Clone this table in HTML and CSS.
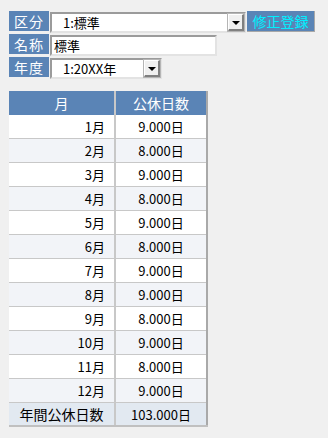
FILE: index.html
```html
<!DOCTYPE html>
<html lang="ja">
<head>
<meta charset="utf-8">
<title>公休日数</title>
<link rel="stylesheet" href="styles.css">
</head>
<body>
<div class="page">
  <div class="form">
    <div class="row">
      <span class="label">区分</span>
      <div class="field select w-kubun">
        <span class="value">1:標準</span>
        <span class="drop"><span class="tri"></span></span>
      </div>
      <span class="btn">修正登録</span>
    </div>
    <div class="row">
      <span class="label">名称</span>
      <div class="field input w-name"><span class="value tight">標準</span></div>
    </div>
    <div class="row">
      <span class="label">年度</span>
      <div class="field select w-year">
        <span class="value">1:20XX年</span>
        <span class="drop"><span class="tri"></span></span>
      </div>
    </div>
  </div>

  <table class="grid">
    <thead>
      <tr><th>月</th><th>公休日数</th></tr>
    </thead>
    <tbody>
      <tr><td class="m">1月</td><td class="d">9.000日</td></tr>
      <tr><td class="m">2月</td><td class="d">8.000日</td></tr>
      <tr><td class="m">3月</td><td class="d">9.000日</td></tr>
      <tr><td class="m">4月</td><td class="d">8.000日</td></tr>
      <tr><td class="m">5月</td><td class="d">9.000日</td></tr>
      <tr><td class="m">6月</td><td class="d">8.000日</td></tr>
      <tr><td class="m">7月</td><td class="d">9.000日</td></tr>
      <tr><td class="m">8月</td><td class="d">9.000日</td></tr>
      <tr><td class="m">9月</td><td class="d">8.000日</td></tr>
      <tr><td class="m">10月</td><td class="d">9.000日</td></tr>
      <tr><td class="m">11月</td><td class="d">8.000日</td></tr>
      <tr><td class="m">12月</td><td class="d">9.000日</td></tr>
    </tbody>
    <tfoot>
      <tr><td class="t">年間公休日数</td><td class="d">103.000日</td></tr>
    </tfoot>
  </table>
</div>
</body>
</html>
```

FILE: styles.css
```css
html, body {
  margin: 0;
  padding: 0;
  background: #f0f0f0;
}
body {
  font-family: "Noto Sans CJK JP", "Noto Sans", sans-serif;
  font-size: 13px;
  color: #000;
}
.page {
  padding: 11px 0 0 9px;
}
.form {
  display: flex;
  flex-direction: column;
  gap: 2px;
}
.row {
  display: flex;
  align-items: flex-start;
  gap: 1px;
  height: 21px;
}
.label {
  width: 40px;
  height: 20px;
  background: #5a84b6;
  color: #fff;
  font-size: 14px;
  line-height: 20px;
  text-align: center;
  letter-spacing: 1px;
}
.field {
  box-sizing: border-box;
  margin-top: 1px;
  height: 21px;
  background: #fff;
  border-top: 2px solid #9b9b9b;
  border-left: 2px solid #9b9b9b;
  border-right: 2px solid #e3e3e3;
  border-bottom: 2px solid #e3e3e3;
  display: flex;
  align-items: center;
  position: relative;
}
.w-kubun { width: 196px; }
.w-name { width: 167px; }
.w-year { width: 112px; }
.value {
  padding-left: 11px;
  line-height: 17px;
  white-space: nowrap;
  flex: 1;
}
.value.tight { padding-left: 2px; }
.drop {
  box-sizing: border-box;
  width: 16px;
  height: 17px;
  margin-right: 0;
  background: #f0f0f0;
  border-top: 1px solid #fff;
  border-left: 1px solid #fff;
  border-right: 2px solid #808080;
  border-bottom: 2px solid #808080;
  outline: 1px solid #b5b5b5;
  display: flex;
  align-items: center;
  justify-content: center;
}
.tri {
  width: 0;
  height: 0;
  border-left: 4px solid transparent;
  border-right: 4px solid transparent;
  border-top: 4px solid #000;
  margin-top: 1px;
}
.btn {
  box-sizing: border-box;
  width: 68px;
  height: 21px;
  background: #5a84b6;
  color: #00f0ff;
  font-size: 14px;
  line-height: 20px;
  text-align: center;
  border-right: 1px solid #a8a8a8;
  border-bottom: 1px solid #a8a8a8;
}
.grid {
  margin-top: 13px;
  border-collapse: collapse;
  width: 199px;
  table-layout: fixed;
}
.grid th {
  background: #5a84b6;
  color: #fff;
  font-weight: normal;
  font-size: 14px;
  height: 24px;
  padding: 0;
  text-align: center;
  border-right: 2px solid #c8c8c8;
}
.grid th:first-child { width: 105px; }
.grid th:last-child { border-right: 2px solid #a9a9a9; }
.grid td {
  height: 23px;
  padding: 0;
  border-bottom: 1px solid #c8c8c8;
  border-right: 2px solid #c8c8c8;
  white-space: nowrap;
}
.grid td:last-child { border-right: 2px solid #a9a9a9; }
.grid tbody tr:nth-child(odd) { background: #ffffff; }
.grid tbody tr:nth-child(even) { background: #f2f4f8; }
.grid .m {
  text-align: right;
  padding-right: 9px;
}
.grid .d {
  text-align: center;
}
.grid tfoot tr { background: #e2e9f1; }
.grid tfoot td {
  border-bottom: 2px solid #c0c0c0;
  height: 22px;
}
.grid .t {
  text-align: center;
  font-size: 14px;
}
```
